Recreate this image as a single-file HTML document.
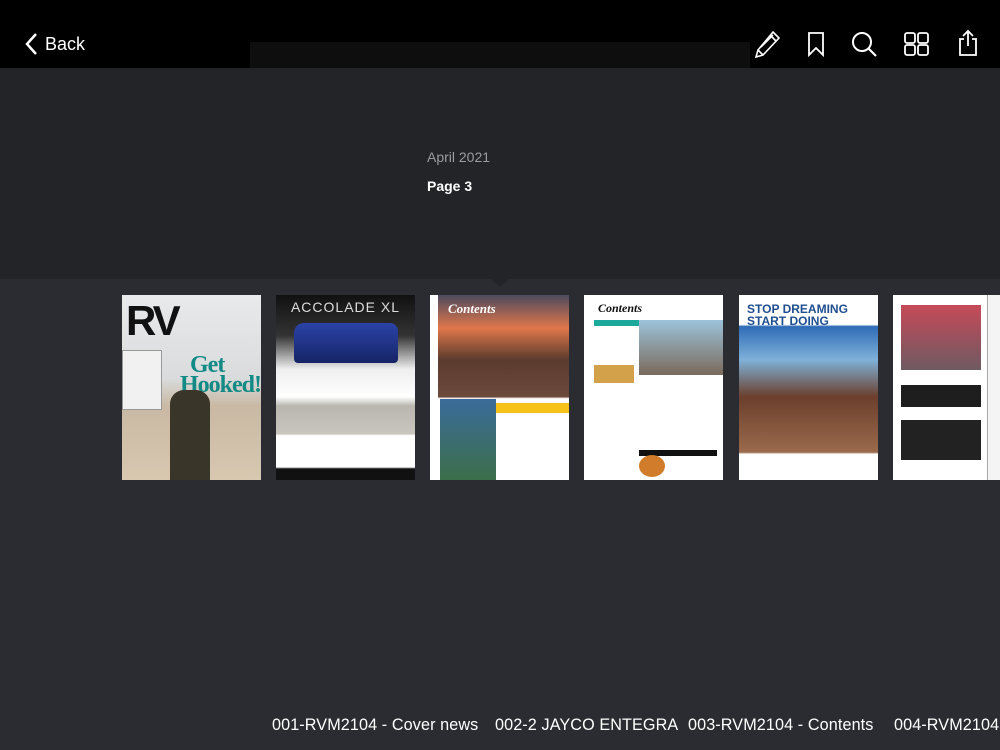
<!DOCTYPE html>
<html><head><meta charset="utf-8"><style>
*{margin:0;padding:0;box-sizing:border-box}
body{width:1000px;height:750px;overflow:hidden;background:#2a2c31;font-family:"Liberation Sans",sans-serif;position:relative}
#top{position:absolute;left:0;top:0;width:1000px;height:68px;background:#000}
#ghost{position:absolute;left:250px;top:42px;width:500px;height:26px;background:#0e0e0e}
#panel{position:absolute;left:0;top:68px;width:1000px;height:211px;background:#222428}
.tri{position:absolute;left:491px;top:279px;width:0;height:0;border-left:9px solid transparent;border-right:9px solid transparent;border-top:8px solid #222428}
.t{position:absolute;top:295px;height:185px;overflow:hidden}
.lab{position:absolute;top:716px;color:#fff;font-size:16.2px;white-space:nowrap;letter-spacing:0.1px}
svg{position:absolute}
</style></head><body>
<div id="top"></div><div id="ghost"></div>
<svg style="left:24px;top:32px" width="16" height="24" viewBox="0 0 16 24"><path d="M12 2 L3 12 L12 22" stroke="#fff" stroke-width="2.5" fill="none"/></svg>
<div style="position:absolute;left:45px;top:34px;color:#fff;font-size:18px">Back</div>
<svg style="left:753px;top:29px" width="30" height="30" viewBox="0 0 30 30"><path d="M20 3 L26 9 L10 26 L3 28 L5 21 Z M17 6 L23 12 M5 21 L10 26 M8 18 L20 6" stroke="#fff" stroke-width="1.6" fill="none"/></svg>
<svg style="left:806px;top:31px" width="20" height="26" viewBox="0 0 20 26"><path d="M3 2 H17 V24 L10 17 L3 24 Z" stroke="#fff" stroke-width="1.8" fill="none"/></svg>
<svg style="left:850px;top:30px" width="28" height="28" viewBox="0 0 28 28"><circle cx="12" cy="12" r="9" stroke="#fff" stroke-width="2" fill="none"/><path d="M18.5 18.5 L26 26" stroke="#fff" stroke-width="2.2"/></svg>
<svg style="left:903px;top:31px" width="28" height="26" viewBox="0 0 28 26"><g stroke="#fff" stroke-width="1.8" fill="none"><rect x="2" y="2" width="10" height="10" rx="2"/><rect x="15" y="2" width="10" height="10" rx="2"/><rect x="2" y="14" width="10" height="10" rx="2"/><rect x="15" y="14" width="10" height="10" rx="2"/></g></svg>
<svg style="left:957px;top:29px" width="22" height="28" viewBox="0 0 22 28"><path d="M7 10 H3 V26 H19 V10 H15 M11 2 V17 M6 7 L11 2 L16 7" stroke="#fff" stroke-width="1.8" fill="none"/></svg>
<div id="panel"></div><div class="tri"></div>
<div style="position:absolute;left:427px;top:149px;color:#9a9ca0;font-size:14px">April 2021</div>
<div style="position:absolute;left:427px;top:178px;color:#fff;font-size:14px;font-weight:bold">Page 3</div>

<div class="t" style="left:122px;width:139px;background:linear-gradient(#e8eaec 0,#d9dbdc 45%,#c9b9a4 60%,#d8c8b0 100%)">
<div style="position:absolute;left:4px;top:2px;font-size:42px;font-weight:bold;color:#111;letter-spacing:-3px">RV</div>
<div style="position:absolute;left:58px;top:60px;font-size:24px;font-weight:bold;color:#128a86;font-family:'Liberation Serif',serif;line-height:20px;letter-spacing:-1px">&nbsp;&nbsp;Get<br>Hooked!</div>
<div style="position:absolute;left:48px;top:95px;width:40px;height:90px;background:#3a3529;border-radius:14px 14px 0 0"></div>
<div style="position:absolute;left:0;top:55px;width:40px;height:60px;background:#f1f1f1;border:1px solid #999"></div></div>
<div class="t" style="left:276px;width:139px;background:linear-gradient(#111 0,#333 22%,#eee 40%,#fff 55%,#b9b6b0 60%,#c9c6be 75%,#fff 76%,#fff 93%,#111 94%)">
<div style="position:absolute;left:0;width:139px;top:4px;text-align:center;color:#ddd;font-size:14px;letter-spacing:1px">ACCOLADE XL</div>
<div style="position:absolute;left:18px;top:28px;width:104px;height:40px;background:linear-gradient(#2b43a8,#162466);border-radius:10px 8px 4px 4px"></div></div>
<div class="t" style="left:430px;width:139px;background:linear-gradient(#4d4a5e 0,#e0774a 18%,#5b3b2e 35%,#6c4a3c 55%,#fff 56%)">
<div style="position:absolute;left:18px;top:6px;color:#fff;font-size:13px;font-weight:bold;font-style:italic;font-family:'Liberation Serif',serif">Contents</div>
<div style="position:absolute;left:0;top:0;width:8px;height:185px;background:#fff"></div>
<div style="position:absolute;left:10px;top:104px;width:56px;height:81px;background:linear-gradient(#3a6c9a,#3c6e4a)"></div>
<div style="position:absolute;left:66px;top:108px;width:73px;height:10px;background:#f5c218"></div></div>
<div class="t" style="left:584px;width:139px;background:#fff">
<div style="position:absolute;left:14px;top:6px;color:#111;font-size:12px;font-weight:bold;font-style:italic;font-family:'Liberation Serif',serif">Contents</div>
<div style="position:absolute;left:10px;top:25px;width:45px;height:6px;background:#1da89c"></div>
<div style="position:absolute;left:55px;top:25px;width:84px;height:55px;background:linear-gradient(#9cc3dc,#7a6a5a)"></div>
<div style="position:absolute;left:10px;top:70px;width:40px;height:18px;background:#d3a14a"></div>
<div style="position:absolute;left:55px;top:155px;width:78px;height:6px;background:#111"></div>
<div style="position:absolute;left:55px;top:160px;width:26px;height:22px;border-radius:50%;background:#d07c2a"></div></div>
<div class="t" style="left:739px;width:139px;background:linear-gradient(#fff 0,#fff 16%,#2f6cb6 17%,#7fb1d9 35%,#6b3f2c 55%,#9b6a4c 85%,#fff 86%)">
<div style="position:absolute;left:8px;top:8px;color:#1f4e8f;font-size:12px;font-weight:bold;line-height:12px">STOP DREAMING<br>START DOING</div></div>
<div class="t" style="left:893px;width:107px;background:#fff">
<div style="position:absolute;left:8px;top:10px;width:80px;height:65px;background:linear-gradient(#c64a58,#6e5a62)"></div>
<div style="position:absolute;left:8px;top:90px;width:80px;height:22px;background:#1e1e1e"></div>
<div style="position:absolute;left:8px;top:125px;width:80px;height:40px;background:#222"></div>
<div style="position:absolute;left:94px;top:0;width:13px;height:185px;background:#f4f4f4;border-left:1px solid #aaa"></div></div>

<div class="lab" style="left:272px">001-RVM2104 - Cover news</div>
<div class="lab" style="left:495px">002-2 JAYCO ENTEGRA</div>
<div class="lab" style="left:688px">003-RVM2104 - Contents</div>
<div class="lab" style="left:894px">004-RVM2104</div>
</body></html>
